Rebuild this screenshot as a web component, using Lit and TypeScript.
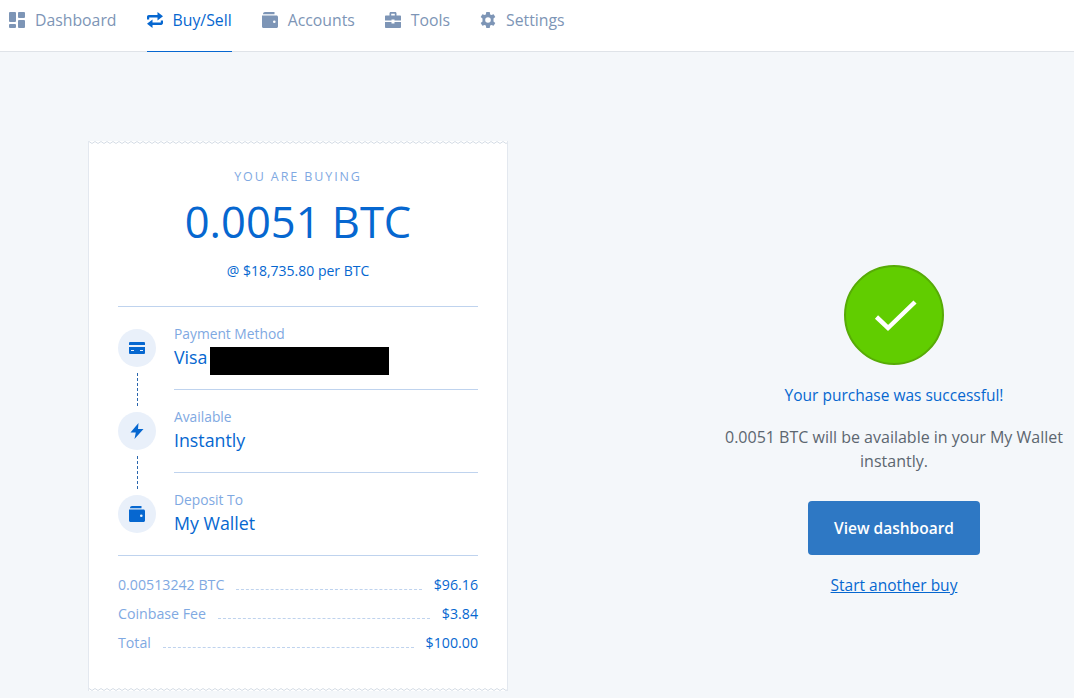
import { LitElement, html, css, svg } from 'lit';
import { customElement } from 'lit/decorators.js';

const icons = {
  dashboard: svg`<path d="M0 1a1 1 0 0 1 1-1h5a1 1 0 0 1 1 1v8a1 1 0 0 1-1 1H1a1 1 0 0 1-1-1zM9 1a1 1 0 0 1 1-1h5a1 1 0 0 1 1 1v4a1 1 0 0 1-1 1h-5a1 1 0 0 1-1-1zM0 13a1 1 0 0 1 1-1h5a1 1 0 0 1 1 1v2a1 1 0 0 1-1 1H1a1 1 0 0 1-1-1zM9 9a1 1 0 0 1 1-1h5a1 1 0 0 1 1 1v6a1 1 0 0 1-1 1h-5a1 1 0 0 1-1-1z"/>`,
  swap: svg`<path d="M10.500 0 16 4.200l-5.500 4.200V5.400H2.200v2.200H0V4.900C0 3.900.8 3.100 1.800 3.100h8.700zM5.500 16 0 11.800l5.500-4.200v3h8.300V8.400H16v2.700c0 1-.8 1.800-1.800 1.800H5.500z"/>`,
  wallet: svg`<path d="M3 0h9.500v2.200H1C1 .9 1.900 0 3 0zM0 3.600h14.500c.8 0 1.500.7 1.500 1.500v9.400c0 .8-.7 1.500-1.500 1.500h-13C.7 16 0 15.300 0 14.500zM12.300 8.500a1.300 1.300 0 1 0 0 2.600 1.300 1.300 0 0 0 0-2.600z" fill-rule="evenodd"/>`,
  tools: svg`<path d="M4.500 3.500V1.300C4.500.6 5.100 0 5.800 0h4.400c.7 0 1.300.6 1.300 1.300v2.200h3.700c.3 0 .8.500.8.800v4.200H9.500V7.500h-3v1H0V4.300c0-.3.500-.8.800-.8zM6.200 1.700v1.800h3.600V1.700zM0 10h6.500v1.500h3V10H16v5.200c0 .4-.4.8-.8.8H.8c-.4 0-.8-.4-.8-.8z" fill-rule="evenodd"/>`,
  gear: svg`<path d="M6.300 0h3.400l.5 2.400 1.100.6 2.300-.8L15.300 5l-1.800 1.600v2.800l1.800 1.600-1.700 2.800-2.300-.8-1.100.6-.5 2.400H6.300l-.5-2.400-1.100-.6-2.300.8L.7 11l1.800-1.600V6.600L.7 5l1.700-2.800 2.300.8 1.100-.6zM8 5.200a2.800 2.800 0 1 0 0 5.600 2.800 2.800 0 0 0 0-5.600z" fill-rule="evenodd"/>`,
  card: svg`<path d="M1 0h14a1 1 0 0 1 1 1v2H0V1a1 1 0 0 1 1-1zM0 5h16v6a1 1 0 0 1-1 1H1a1 1 0 0 1-1-1zM2 8v1h3V8zM11 8v1h3V8z" transform="translate(0 2)" fill-rule="evenodd"/>`,
  bolt: svg`<path d="M9.500 0 1.500 9.500h5.300L5.500 16l9-10H9z"/>`,
};

const nav = [
  { label: 'Dashboard', icon: icons.dashboard },
  { label: 'Buy/Sell', icon: icons.swap, active: true },
  { label: 'Accounts', icon: icons.wallet },
  { label: 'Tools', icon: icons.tools },
  { label: 'Settings', icon: icons.gear },
];

const details = [
  { label: 'Payment Method', value: 'Visa', icon: icons.card, redacted: true },
  { label: 'Available', value: 'Instantly', icon: icons.bolt },
  { label: 'Deposit To', value: 'My Wallet', icon: icons.wallet },
];

const totals = [
  { label: '0.00513242 BTC', value: '$96.16' },
  { label: 'Coinbase Fee', value: '$3.84' },
  { label: 'Total', value: '$100.00' },
];

@customElement('app-root')
export class AppRoot extends LitElement {
  static styles = css`
    :host {
      display: block;
      height: 698px;
      overflow: hidden;
      background: #f4f7fa;
      font-family: 'Open Sans', 'Noto Sans', sans-serif;
    }
    svg {
      display: block;
      fill: currentColor;
    }
    .nav {
      display: flex;
      gap: 30px;
      height: 51px;
      padding-left: 9px;
      background: #fff;
      border-bottom: 1px solid #dfe3e8;
    }
    .nav-item {
      display: flex;
      gap: 10px;
      height: 40px;
      padding-bottom: 11px;
      align-items: center;
      font-size: 15.800px;
      color: #7d95b6;
    }
    .nav-item.active {
      color: #0667d0;
      border-bottom: 1px solid #0667d0;
      margin-bottom: -1px;
    }
    .nav-item svg {
      width: 16px;
      height: 16px;
    }
    .main {
      display: flex;
      padding: 89px 0 0 88px;
    }
    .card {
      position: relative;
      width: 420px;
      height: 550px;
      box-sizing: border-box;
      padding: 0 29px;
      background: #fff;
      border-left: 1px solid #e3e8ef;
      border-right: 1px solid #e3e8ef;
    }
    .edge {
      position: absolute;
      left: 0;
      width: 100%;
      height: 3px;
    }
    .edge.top {
      top: 0;
    }
    .edge.bottom {
      bottom: 0;
    }
    .edge path {
      fill: none;
      stroke: #d5dce5;
    }
    .head {
      height: 166px;
      box-sizing: border-box;
      padding-top: 28px;
      text-align: center;
      border-bottom: 1px solid #bfd3ee;
    }
    .eyebrow {
      font-size: 12.500px;
      line-height: 16px;
      letter-spacing: 1.900px;
      color: #7fa9e2;
    }
    .amount {
      margin-top: 9px;
      font-size: 43.500px;
      line-height: 56px;
      color: #0667d0;
    }
    .rate {
      margin-top: 12px;
      font-size: 14px;
      line-height: 18px;
      color: #0667d0;
    }
    .details {
      border-bottom: 1px solid #bfd3ee;
    }
    .detail {
      display: flex;
      gap: 18px;
      height: 83px;
    }
    .detail:last-child {
      height: 82px;
    }
    .marker {
      width: 38px;
      padding-top: 22px;
    }
    .circle {
      display: flex;
      align-items: center;
      justify-content: center;
      width: 38px;
      height: 38px;
      border-radius: 50%;
      background: #e9f0fa;
      color: #0667d0;
    }
    .circle svg {
      width: 16px;
      height: 16px;
    }
    .dash {
      width: 0;
      height: 33px;
      margin: 6px 0 0 19px;
      border-left: 1px dashed #2a66ad;
    }
    .detail-text {
      flex: 1;
      padding-top: 17px;
      border-bottom: 1px solid #bfd3ee;
    }
    .detail:last-child .detail-text {
      border-bottom: 0;
    }
    .detail-label {
      font-size: 13.800px;
      line-height: 20px;
      color: #7fa9e2;
    }
    .detail-value {
      display: flex;
      gap: 3px;
      height: 28px;
      font-size: 17.800px;
      line-height: 26px;
      color: #0667d0;
    }
    .redacted {
      width: 179px;
      height: 28px;
      margin-top: 3px;
      background: #000;
    }
    .totals {
      display: flex;
      flex-direction: column;
      gap: 9px;
      padding-top: 19px;
    }
    .total {
      display: flex;
      gap: 12px;
      font-size: 14.200px;
      line-height: 20px;
    }
    .total-label {
      color: #7fa9e2;
    }
    .total-value {
      color: #0667d0;
    }
    .leader {
      flex: 1;
      height: 14px;
      border-bottom: 1px dashed #bfd3ee;
    }
    .result {
      display: flex;
      flex-direction: column;
      align-items: center;
      width: 360px;
      margin-left: 206px;
      padding-top: 124px;
      text-align: center;
    }
    .check {
      display: flex;
      align-items: center;
      justify-content: center;
      width: 100px;
      height: 100px;
      box-sizing: border-box;
      border: 2px solid #57ab06;
      border-radius: 50%;
      background: #61cd00;
    }
    .check svg {
      width: 46px;
      height: 36px;
      fill: none;
      stroke: #fff;
      stroke-width: 4.500;
    }
    .success {
      margin-top: 20px;
      font-size: 15.500px;
      line-height: 20px;
      color: #0667d0;
    }
    .note {
      margin-top: 20px;
      font-size: 16px;
      line-height: 24px;
      color: #5c6670;
    }
    .cta {
      width: 172px;
      height: 54px;
      margin-top: 28px;
      border: 0;
      border-radius: 4px;
      background: #2e78c4;
      color: #fff;
      font: 600 15.500px 'Open Sans', 'Noto Sans', sans-serif;
    }
    .again {
      margin-top: 20px;
      font-size: 15.500px;
      line-height: 20px;
      color: #0667d0;
      text-decoration: underline;
    }
  `;

  private edge(side: string) {
    return html`<svg class="edge ${side}" aria-hidden="true">
      <defs>
        <pattern id="zig-${side}" width="6" height="3" patternUnits="userSpaceOnUse">
          <path d="M0 .5 3 2.500 6 .5"></path>
        </pattern>
      </defs>
      <rect width="100%" height="3" fill="url(#zig-${side})"></rect>
    </svg>`;
  }

  render() {
    return html`
      <div class="nav">
        ${nav.map(
          (item) => html`<div class="nav-item ${item.active ? 'active' : ''}">
            <svg viewBox="0 0 16 16">${item.icon}</svg>${item.label}
          </div>`,
        )}
      </div>
      <div class="main">
        <div class="card">
          ${this.edge('top')}
          <div class="head">
            <div class="eyebrow">YOU ARE BUYING</div>
            <div class="amount">0.0051 BTC</div>
            <div class="rate">@ $18,735.80 per BTC</div>
          </div>
          <div class="details">
            ${details.map(
              (d, i) => html`<div class="detail">
                <div class="marker">
                  <div class="circle"><svg viewBox="0 0 16 16">${d.icon}</svg></div>
                  ${i < details.length - 1 ? html`<div class="dash"></div>` : ''}
                </div>
                <div class="detail-text">
                  <div class="detail-label">${d.label}</div>
                  <div class="detail-value">
                    ${d.value}${d.redacted ? html`<div class="redacted"></div>` : ''}
                  </div>
                </div>
              </div>`,
            )}
          </div>
          <div class="totals">
            ${totals.map(
              (t) => html`<div class="total">
                <span class="total-label">${t.label}</span>
                <span class="leader"></span>
                <span class="total-value">${t.value}</span>
              </div>`,
            )}
          </div>
          ${this.edge('bottom')}
        </div>
        <div class="result">
          <div class="check">
            <svg viewBox="0 0 46 36"><path d="M5.500 20 17 31 44 5"></path></svg>
          </div>
          <div class="success">Your purchase was successful!</div>
          <div class="note">0.0051 BTC will be available in your My Wallet instantly.</div>
          <button class="cta">View dashboard</button>
          <a class="again">Start another buy</a>
        </div>
      </div>
    `;
  }
}
